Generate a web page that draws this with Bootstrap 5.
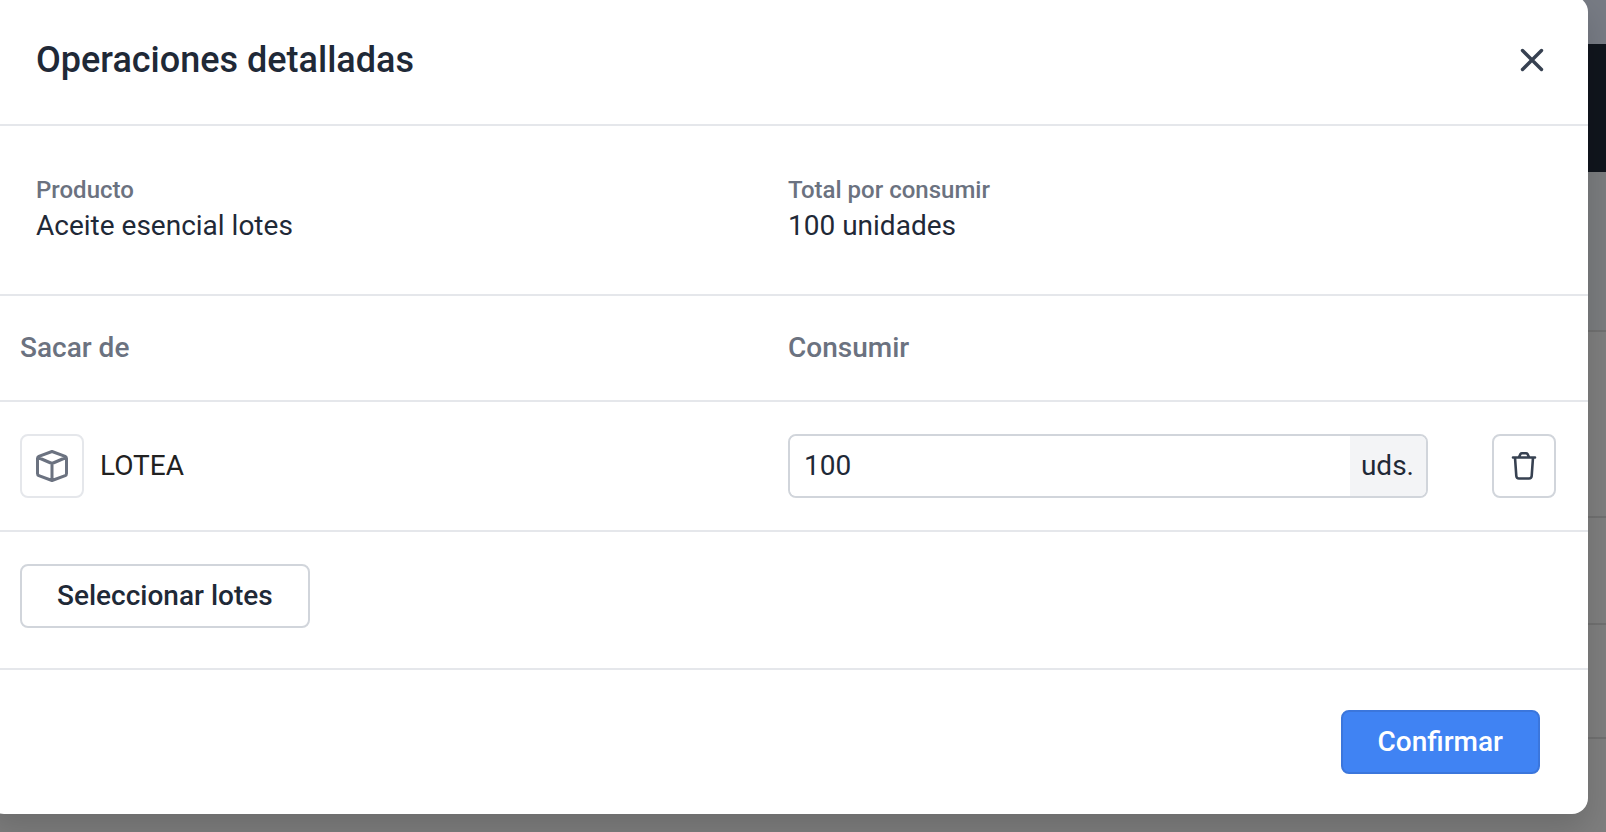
<!DOCTYPE html>
<html lang="es">
<head>
<meta charset="utf-8">
<meta name="viewport" content="width=device-width, initial-scale=1">
<title>Operaciones detalladas</title>
<link rel="stylesheet" href="https://cdn.jsdelivr.net/npm/bootstrap@5.3.0/dist/css/bootstrap.min.css">
<style>
body{font-family:Roboto,"Liberation Sans",sans-serif;font-size:28px;line-height:40px;color:#1f2937;background:#7e7e7e;overflow:hidden;font-variant-ligatures:none}
.page-behind{position:absolute;inset:0;overflow:hidden}
.strip-top{height:44px;background:#777b84}
.strip-nav{height:128px;background:#10151d}
.strip-row{border-bottom:2px solid #707070}
.strip-bar{background:#7a7c7e}
.dialog-panel{position:relative;margin:-4px 18px 18px -12px;background:#fff;border-radius:16px;box-shadow:0 16px 32px rgba(0,0,0,.14)}
.rule{border-bottom:2px solid #e5e7eb}
.dialog-head{padding:32px 40px 32px 48px;height:130px}
.dialog-head h1{font-size:36px;line-height:48px;font-weight:500}
.close-btn{width:32px;height:32px;color:#374151}
.facts{padding:48px 0;height:170px}
.facts>div{width:50%}
.fact-first{padding-left:48px}
.facts dt{font-size:24px;line-height:32px;font-weight:500;color:#6b7280}
.facts dd{line-height:40px}
.lots{table-layout:fixed}
.lots th,.lots td{padding:0}
.lots th{height:105px;font-weight:500;color:#6b7280}
.lots td{height:130px}
.lots .c-lot{width:50%;padding:0 0 0 32px}
.lots .c-del{width:160px;padding:0 32px 0 64px}
.lot-name{color:#212121}
.tile{width:64px;height:64px;border:2px solid #e5e7eb;border-radius:8px;color:#6b7280}
.outline{height:64px;border:2px solid #d1d5db;border-radius:8px;background:#fff;color:#1f2937;font-size:28px;line-height:40px;font-weight:500}
.wide-btn{padding:0 35px}
.icon-only{width:64px;color:#374151}
.qty{height:64px;border:2px solid #d1d5db;border-radius:8px;overflow:hidden}
.qty .form-control{border:0;font-size:28px;color:#1f2937;padding:0 14px}
.qty .input-group-text{border:0;background:#f3f4f6;font-size:28px;color:#1f2937;padding:0 12px;border-radius:0}
.actions{padding:32px 24px 40px 32px}
.dialog-foot{padding:40px 48px}
.confirm{height:64px;border:2px solid #3b76dc;border-radius:8px;background:#4083f3;color:#fff;font-size:28px;line-height:40px;font-weight:500}
</style>
</head>
<body>
<div class="page-behind" aria-hidden="true">
<div class="strip-top"></div><div class="strip-nav"></div>
<div class="strip-row strip-bar" style="height:160px"></div><div class="strip-row" style="height:186px"></div><div class="strip-row" style="height:107px"></div><div class="strip-row" style="height:114px"></div>
</div>
<main class="dialog-panel" role="dialog" aria-labelledby="dlg-title">
<header class="dialog-head rule d-flex align-items-center justify-content-between">
<h1 id="dlg-title" class="m-0">Operaciones detalladas</h1>
<button type="button" class="close-btn btn p-0 border-0 d-flex align-items-center justify-content-center" aria-label="Cerrar">
<svg width="32" height="32" viewBox="0 0 32 32" fill="none" stroke="currentColor" stroke-width="3.400" stroke-linecap="round"><path d="M6.500 6.500 25.500 25.500M25.500 6.500 6.500 25.500"/></svg>
</button>
</header>
<dl class="facts rule d-flex m-0">
<div class="fact-first"><dt>Producto</dt><dd class="m-0">Aceite esencial lotes</dd></div>
<div><dt>Total por consumir</dt><dd class="m-0">100 unidades</dd></div>
</dl>
<table class="lots w-100">
<thead><tr class="rule"><th class="c-lot" scope="col">Sacar de</th><th scope="col">Consumir</th><th class="c-del"></th></tr></thead>
<tbody><tr class="rule">
<td class="c-lot"><div class="d-flex align-items-center gap-3">
<span class="tile d-flex align-items-center justify-content-center"><svg width="36" height="36" viewBox="0 0 36 36" fill="none" stroke="currentColor" stroke-width="3" stroke-linejoin="round" stroke-linecap="round"><path d="M18 3.500 31.200 8.300Q32.500 9 32.500 10.500V25.500Q32.500 27 31.200 27.700L18 32.500 4.800 27.700Q3.500 27 3.500 25.500V10.500Q3.500 9 4.800 8.300ZM4 9.500 18 15.500 32 9.500M18 15.500V32"/></svg></span>
<span class="lot-name">LOTEA</span></div></td>
<td><div class="qty input-group flex-nowrap"><input class="form-control" type="text" inputmode="numeric" value="100" aria-label="Consumir" aria-describedby="unit"><span class="input-group-text" id="unit">uds.</span></div></td>
<td class="c-del"><button type="button" class="btn outline icon-only p-0 d-flex align-items-center justify-content-center" aria-label="Eliminar">
<svg width="32" height="32" viewBox="0 0 32 32" fill="none" stroke="currentColor" stroke-width="2.600" stroke-linejoin="round" stroke-linecap="round"><path d="M5 7.500H27M7 7.500 8.300 26Q8.500 28.500 11 28.500H21Q23.500 28.500 23.700 26L25 7.500M11 7 12.500 4Q13 3.200 14 3.200H18Q19 3.200 19.500 4L21 7"/></svg></button></td>
</tr></tbody>
</table>
<div class="actions rule"><button type="button" class="btn outline wide-btn">Seleccionar lotes</button></div>
<footer class="dialog-foot d-flex justify-content-end"><button type="button" class="btn confirm wide-btn">Confirmar</button></footer>
</main>
<script src="https://cdn.jsdelivr.net/npm/bootstrap@5.3.0/dist/js/bootstrap.bundle.min.js"></script>
</body>
</html>
